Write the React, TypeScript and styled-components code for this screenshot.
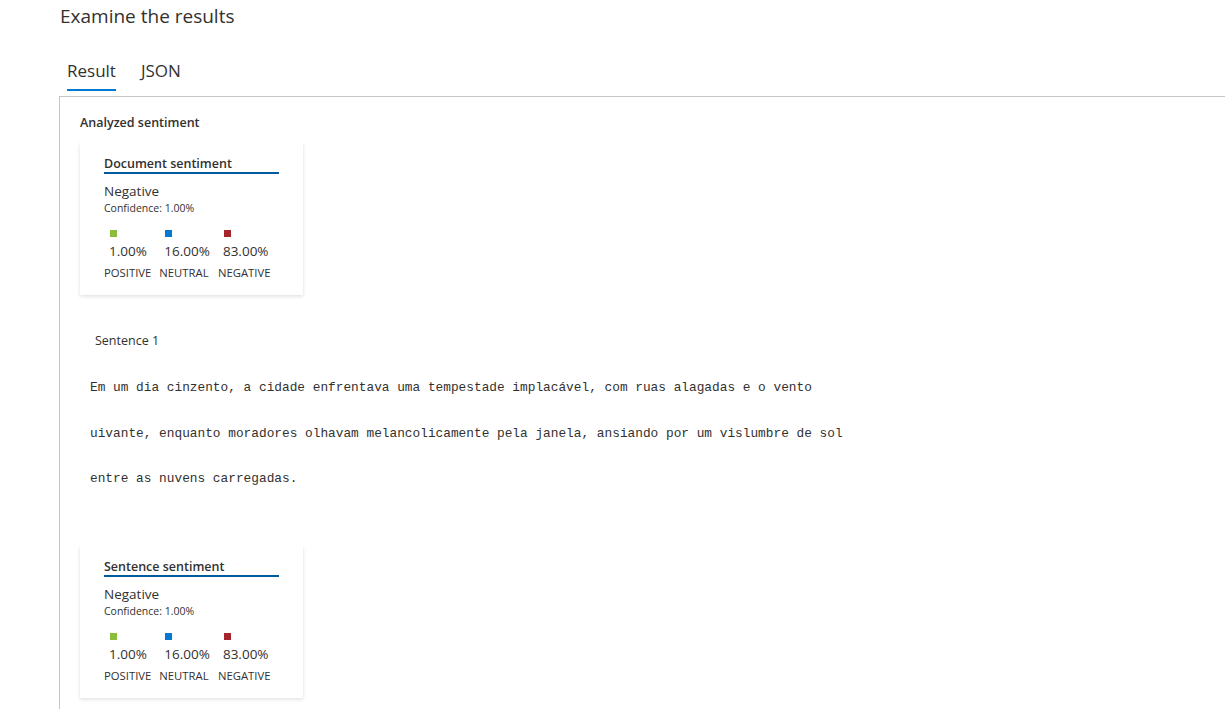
import styled, { createGlobalStyle } from "styled-components";

const GlobalStyle = createGlobalStyle`
  body {
    margin: 0;
    background: #ffffff;
    font-family: "Open Sans", "Noto Sans", sans-serif;
    color: #323130;
  }
`;

interface Scores {
  positive: string;
  neutral: string;
  negative: string;
}

interface SentimentCardProps {
  heading: string;
  label: string;
  confidence: string;
  scores: Scores;
}

const legend = [
  { key: "positive" as const, name: "POSITIVE", color: "#8cbd3a" },
  { key: "neutral" as const, name: "NEUTRAL", color: "#0078d4" },
  { key: "negative" as const, name: "NEGATIVE", color: "#a4262c" },
];

const SentimentCard: React.FunctionComponent<SentimentCardProps> = ({
  heading,
  label,
  confidence,
  scores,
}) => {
  return (
    <Card>
      <CardHeading>{heading}</CardHeading>
      <SentimentLabel>{label}</SentimentLabel>
      <Confidence>{`Confidence: ${confidence}`}</Confidence>
      <Legend>
        {legend.map((item) => (
          <LegendColumn key={item.key}>
            <Swatch $color={item.color} />
            <Percent>{scores[item.key]}</Percent>
            <LegendName>{item.name}</LegendName>
          </LegendColumn>
        ))}
      </Legend>
    </Card>
  );
};

const scores: Scores = {
  positive: "1.00%",
  neutral: "16.00%",
  negative: "83.00%",
};

const lines = [
  "Em um dia cinzento, a cidade enfrentava uma tempestade implacável, com ruas alagadas e o vento",
  "uivante, enquanto moradores olhavam melancolicamente pela janela, ansiando por um vislumbre de sol",
  "entre as nuvens carregadas.",
];

export default function App() {
  return (
    <>
      <GlobalStyle />
      <Page>
        <Title>Examine the results</Title>
        <Tabs>
          <Tab $active>Result</Tab>
          <Tab>JSON</Tab>
        </Tabs>
        <Panel>
          <SectionLabel>Analyzed sentiment</SectionLabel>
          <SentimentCard
            heading="Document sentiment"
            label="Negative"
            confidence="1.00%"
            scores={scores}
          />
          <SentenceTitle>Sentence 1</SentenceTitle>
          <SentenceText>
            {lines.map((line) => (
              <SentenceLine key={line}>{line}</SentenceLine>
            ))}
          </SentenceText>
          <SentimentCard
            heading="Sentence sentiment"
            label="Negative"
            confidence="1.00%"
            scores={scores}
          />
        </Panel>
      </Page>
    </>
  );
}

const Page = styled.div`
  padding: 3px 0 0 59px;
  height: 709px;
  box-sizing: border-box;
  overflow: hidden;
`;

const Title = styled.h1`
  margin: 0 0 0 1px;
  font-size: 19px;
  font-weight: 400;
  line-height: 26px;
  color: #323130;
`;

const Tabs = styled.div`
  display: flex;
  gap: 25px;
  margin: 30px 0 0 8px;
`;

const Tab = styled.div<{ $active?: boolean }>`
  font-size: 17px;
  line-height: 24px;
  padding-bottom: 6px;
  color: #323130;
  border-bottom: 2px solid ${(p) => (p.$active ? "#0078d4" : "transparent")};
`;

const Panel = styled.div`
  margin-top: 5px;
  border-top: 1px solid #c8c6c4;
  border-left: 1px solid #c8c6c4;
  padding: 16px 0 20px 20px;
`;

const SectionLabel = styled.div`
  font-size: 12.5px;
  font-weight: 600;
  line-height: 20px;
  margin-bottom: 9px;
`;

const Card = styled.div`
  width: 223px;
  box-sizing: border-box;
  padding: 14px 24px 14px 24px;
  background: #ffffff;
  box-shadow: 0 1.6px 3.6px rgba(0, 0, 0, 0.13), 0 0.3px 0.9px rgba(0, 0, 0, 0.11);
`;

const CardHeading = styled.div`
  font-size: 12.5px;
  font-weight: 600;
  line-height: 16px;
  border-bottom: 2px solid #005a9e;
  margin-bottom: 8px;
`;

const SentimentLabel = styled.div`
  font-size: 13.5px;
  line-height: 18px;
`;

const Confidence = styled.div`
  font-size: 10.5px;
  line-height: 16px;
`;

const Legend = styled.div`
  display: flex;
  gap: 8px;
  margin-top: 14px;
`;

const LegendColumn = styled.div`
  display: flex;
  flex-direction: column;
`;

const Swatch = styled.span<{ $color: string }>`
  width: 7px;
  height: 7px;
  margin-left: 6px;
  background: ${(p) => p.$color};
`;

const Percent = styled.div`
  font-size: 13.5px;
  line-height: 18px;
  margin-left: 5px;
  margin-top: 5px;
`;

const LegendName = styled.div`
  font-size: 11.3px;
  line-height: 16px;
  margin-top: 5px;
  color: #323130;
`;

const SentenceTitle = styled.div`
  font-size: 12.5px;
  line-height: 18px;
  margin: 37px 0 0 15px;
`;

const SentenceText = styled.div`
  margin: 15px 0 43px 10px;
`;

const SentenceLine = styled.div`
  font-family: "Liberation Mono", "DejaVu Sans Mono", monospace;
  font-size: 12.8px;
  line-height: 45.5px;
  white-space: pre;
`;
